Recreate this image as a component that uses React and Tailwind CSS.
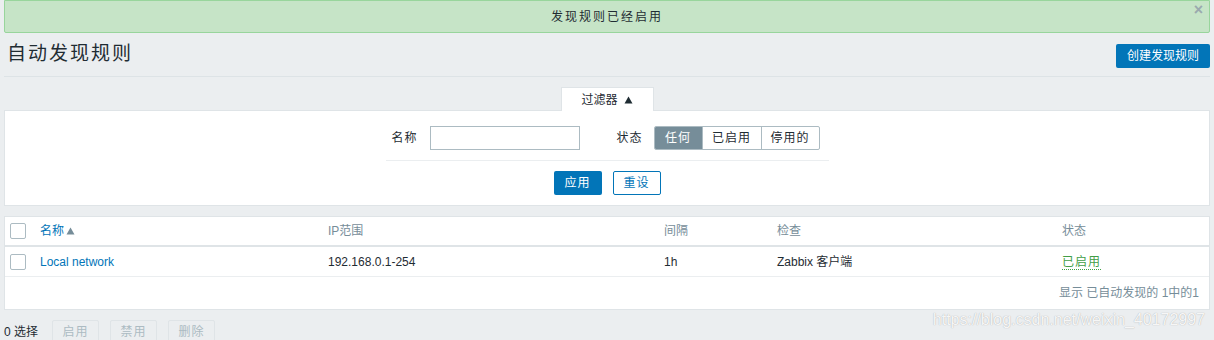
import React from "react";

const F = { fontFamily: '"Liberation Sans", Arial, "Noto Sans CJK SC", sans-serif' };

function Checkbox() {
  return <div className="w-4 h-4 border border-[#acbbc2] rounded-[2px] bg-white" />;
}

export default function App() {
  return (
    <div style={F} className="relative w-[1214px] h-[340px] overflow-hidden bg-[#ebeef0] text-[12px] text-[#1f2c33]">
      {/* message */}
      <div className="mx-1 h-[33px] relative flex items-center justify-center border border-[#98d59c] bg-[#c6e4c7] rounded-b-[2px]">
        <span className="tracking-[2px] text-[#1f2c33]">发现规则已经启用</span>
        <span className="absolute right-[6px] top-[1px] text-[16px] font-bold leading-none text-[#9aa9ae]">×</span>
      </div>

      {/* header */}
      <div className="mx-1 h-[44px] flex items-center justify-between border-b border-[#dde3e6]">
        <h1 className="pl-[3px] text-[19px] tracking-[2px] text-[#1f2c33] font-normal">自动发现规则</h1>
        <button className="h-6 px-[11px] bg-[#0275b8] text-white rounded-[2px] mt-[2px]">创建发现规则</button>
      </div>

      {/* filter tab */}
      <div className="flex justify-center mt-[10px]">
        <div className="relative z-10 w-[93px] h-[24px] -mb-px bg-white border border-b-0 border-[#dfe4e7] flex items-center justify-center gap-[6px]">
          <span>过滤器</span>
          <svg width="9" height="8" viewBox="0 0 9 8"><path d="M0.5 7.5 L4.5 0.5 L8.5 7.5 Z" fill="#1f2c33" /></svg>
        </div>
      </div>

      {/* filter panel */}
      <div className="mx-1 h-[96px] bg-white border border-[#dfe4e7] pt-[15px]">
        <div className="w-[443px] mx-auto">
          <div className="flex items-center h-6">
            <div className="w-[44px] pr-[12px] text-right tracking-[1px]">名称</div>
            <input className="w-[150px] h-6 border border-[#acbbc2] bg-white outline-none" />
            <div className="w-[74px] pr-[11px] text-right tracking-[1px]">状态</div>
            <div className="flex h-6 rounded-[2px] overflow-hidden border border-[#acbbc2]">
              <div className="w-[47px] bg-[#768d99] text-white flex items-center justify-center tracking-[1px]">任何</div>
              <div className="w-[59px] border-l border-[#acbbc2] flex items-center justify-center tracking-[1px]">已启用</div>
              <div className="w-[58px] border-l border-[#acbbc2] flex items-center justify-center tracking-[1px]">停用的</div>
            </div>
          </div>
          <div className="mt-[10px] border-t border-[#ebeef0]" />
          <div className="mt-[10px] flex justify-center gap-[11px]">
            <button className="w-[48px] h-6 bg-[#0275b8] text-white rounded-[2px] tracking-[1px]">应用</button>
            <button className="w-[48px] h-6 bg-white text-[#0275b8] border border-[#0275b8] rounded-[2px] tracking-[1px]">重设</button>
          </div>
        </div>
      </div>

      {/* table */}
      <div className="mx-1 mt-[10px] bg-white border border-[#dfe4e7]">
        <div className="grid grid-cols-[30px_288px_336px_113px_285px_152px] h-[30px] items-center border-b-2 border-[#dfe4e7]">
          <div className="pl-[5px]"><Checkbox /></div>
          <div className="pl-[5px] flex items-center gap-[2px] text-[#0275b8]">
            名称
            <svg width="9" height="8" viewBox="0 0 9 8"><path d="M0.5 7.5 L4.5 0.5 L8.5 7.5 Z" fill="#768d99" /></svg>
          </div>
          <div className="pl-[5px] text-[#768d99]">IP范围</div>
          <div className="pl-[5px] text-[#768d99]">间隔</div>
          <div className="pl-[5px] text-[#768d99]">检查</div>
          <div className="pl-[5px] text-[#768d99]">状态</div>
        </div>
        <div className="grid grid-cols-[30px_288px_336px_113px_285px_152px] h-[30px] items-center border-b border-[#ebeef0]">
          <div className="pl-[5px]"><Checkbox /></div>
          <div className="pl-[5px] text-[#0275b8]">Local network</div>
          <div className="pl-[5px]">192.168.0.1-254</div>
          <div className="pl-[5px]">1h</div>
          <div className="pl-[5px]">Zabbix 客户端</div>
          <div className="pl-[5px]">
            <span className="text-[#429e47] tracking-[1px] border-b border-dotted border-[#429e47]">已启用</span>
          </div>
        </div>
        <div className="h-[32px] flex items-center justify-end pr-[10px] text-[#768d99]">
          显示 已自动发现的 1中的1
        </div>
      </div>

      {/* bottom actions */}
      <div className="mt-[10px] pl-1 flex items-center">
        <span className="mr-[14px] text-[#1f2c33]">0 选择</span>
        <div className="flex gap-[11px]">
          {["启用", "禁用", "删除"].map((t) => (
            <button key={t} className="w-[47px] h-6 border border-[#dfe4e7] bg-[#ebeef0] text-[#acbbc2] rounded-[2px] tracking-[1px]">{t}</button>
          ))}
        </div>
      </div>

      {/* watermark */}
      <div className="absolute right-[9px] top-[310px] text-[16px] leading-[20px] text-white/90 [text-shadow:0_0_1px_#9a9a9a]">
        https://blog.csdn.net/weixin_40172997
      </div>
    </div>
  );
}
